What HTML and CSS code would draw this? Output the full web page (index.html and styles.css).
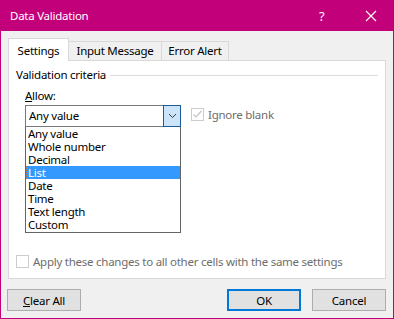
FILE: index.html
```html
<!DOCTYPE html>
<html lang="en">
<head>
  <meta charset="UTF-8">
  <title>Data Validation</title>
  <link rel="stylesheet" href="styles.css">
</head>
<body>
  <div class="dialog">
    <div class="titlebar">
      <span class="title">Data Validation</span>
      <span class="help">?</span>
      <svg class="close" width="12" height="12" viewBox="0 0 12 12">
        <path d="M1 1 L11 11 M11 1 L1 11" stroke="#fff" stroke-width="1.2" fill="none"/>
      </svg>
    </div>
    <div class="content">
      <div class="tabs">
        <div class="tab active">Settings</div>
        <div class="tab input-tab">Input Message</div>
        <div class="tab error-tab">Error Alert</div>
      </div>
      <div class="panel">
        <div class="group-title">
          <span>Validation criteria</span>
          <div class="rule"></div>
        </div>
        <div class="criteria">
          <div class="field-label"><u>A</u>llow:</div>
          <div class="allow-row">
            <div class="combo-wrap">
              <div class="combo">
                <span class="combo-value">Any value</span>
                <span class="combo-btn">
                  <svg width="9" height="6" viewBox="0 0 9 6">
                    <path d="M1 1 L4.5 4.5 L8 1" stroke="#3c3c3c" stroke-width="1" fill="none"/>
                  </svg>
                </span>
              </div>
              <ul class="dropdown">
                <li>Any value</li>
                <li>Whole number</li>
                <li>Decimal</li>
                <li class="selected">List</li>
                <li>Date</li>
                <li>Time</li>
                <li>Text length</li>
                <li>Custom</li>
              </ul>
            </div>
            <label class="check disabled">
              <span class="box">
                <svg width="11" height="11" viewBox="0 0 11 11">
                  <path d="M1.5 5.5 L4 8 L9.5 2" stroke="#c4c4c4" stroke-width="1.2" fill="none"/>
                </svg>
              </span>
              <span>Ignore blank</span>
            </label>
          </div>
        </div>
        <label class="check apply">
          <span class="box"></span>
          <span>Apply these changes to all other cells with the same settings</span>
        </label>
      </div>
      <div class="buttons">
        <button class="btn"><u>C</u>lear All</button>
        <div class="spacer"></div>
        <button class="btn default">OK</button>
        <button class="btn">Cancel</button>
      </div>
    </div>
  </div>
</body>
</html>
```

FILE: styles.css
```css
body {
  margin: 0;
  font-family: "Noto Sans", "Open Sans", sans-serif;
  font-size: 11.5px;
  letter-spacing: -0.25px;
  color: #000;
  background: #fff;
}
.dialog {
  box-sizing: border-box;
  width: 394px;
  height: 319px;
  background: #f0f0f0;
  border: 1px solid #c2007a;
  border-top: none;
  display: flex;
  flex-direction: column;
}
.titlebar {
  height: 31px;
  background: #c2007a;
  color: #fff;
  display: flex;
  align-items: center;
  margin: 0 -1px;
  padding: 0 0 0 10px;
}
.title {
  flex: 1;
}
.help {
  width: 14px;
  margin-right: 32px;
  font-size: 13px;
}
.close {
  margin-right: 17px;
}
.content {
  padding: 7px 7px 0 7px;
  flex: 1;
  display: flex;
  flex-direction: column;
}
.tabs {
  display: flex;
  height: 23px;
  align-items: flex-end;
}
.tab {
  box-sizing: border-box;
  height: 20px;
  line-height: 18px;
  text-align: center;
  border-top: 1px solid #d9d9d9;
  border-right: 1px solid #d9d9d9;
  background: #f0f0f0;
}
.tab.active {
  position: relative;
  z-index: 1;
  width: 61px;
  height: 23px;
  line-height: 24px;
  border-left: 1px solid #d9d9d9;
  background: #fff;
}
.input-tab { width: 93px; }
.error-tab { width: 67px; }
.panel {
  box-sizing: border-box;
  height: 219px;
  margin-top: -1px;
  background: #fff;
  border: 1px solid #d9d9d9;
  padding: 7px 7px 0 7px;
  display: flex;
  flex-direction: column;
}
.group-title {
  display: flex;
  align-items: center;
  height: 14px;
  line-height: 14px;
}
.rule {
  flex: 1;
  height: 1px;
  background: #dcdcdc;
  margin-left: 4px;
}
.criteria {
  padding-left: 9px;
  margin-top: 7px;
}
.field-label {
  height: 14px;
  line-height: 14px;
}
.allow-row {
  display: flex;
  align-items: flex-start;
  margin-top: 2px;
}
.combo-wrap {
  position: relative;
  width: 156px;
}
.combo {
  box-sizing: border-box;
  height: 22px;
  border: 1px solid #7a7a7a;
  display: flex;
  align-items: stretch;
}
.combo-value {
  flex: 1;
  padding-left: 3px;
  line-height: 20px;
}
.combo-btn {
  box-sizing: border-box;
  width: 18px;
  margin: -1px -1px -1px 0;
  border: 1px solid #1c5b98;
  background: #cce4f7;
  display: flex;
  align-items: center;
  justify-content: center;
}
.dropdown {
  position: absolute;
  left: 0;
  top: 22px;
  box-sizing: border-box;
  width: 156px;
  margin: 0;
  padding: 0 0 1px 0;
  list-style: none;
  background: #fff;
  border: 1px solid #646464;
  border-top: none;
}
.dropdown li {
  box-sizing: border-box;
  height: 13px;
  line-height: 13px;
  padding-left: 2px;
}
.dropdown li.selected {
  background: #3399ff;
  color: #fff;
  border: 1px dotted #c9752a;
  line-height: 11px;
  padding-left: 1px;
}
.check {
  display: flex;
  align-items: center;
  color: #6d6d6d;
}
.check .box {
  box-sizing: border-box;
  width: 13px;
  height: 13px;
  border: 1px solid #cccccc;
  background: #fff;
  margin-right: 4px;
  display: flex;
  align-items: center;
  justify-content: center;
}
.check.disabled {
  margin-left: 10px;
  margin-top: 2px;
}
.check.apply {
  margin-top: auto;
  margin-bottom: 9px;
}
.buttons {
  display: flex;
  margin-top: 10px;
  margin-left: -1px;
  gap: 11px;
}
.spacer {
  flex: 1;
}
.btn {
  box-sizing: border-box;
  width: 74px;
  height: 22px;
  font-family: inherit;
  font-size: 11.5px;
  letter-spacing: -0.25px;
  background: #e1e1e1;
  border: 1px solid #adadad;
  color: #000;
  padding: 0;
}
.btn.default {
  border: 2px solid #0078d7;
}
```
